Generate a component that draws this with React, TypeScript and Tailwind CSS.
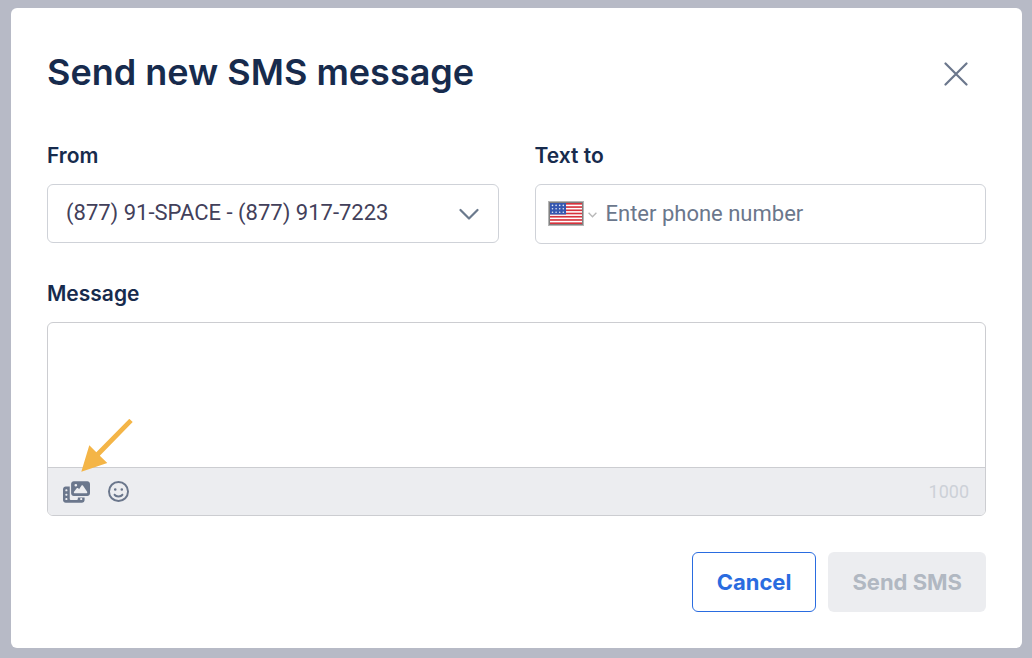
import { useState } from "react";
import { FaPhotoFilm, FaRegFaceSmile } from "react-icons/fa6";

function CloseIcon() {
  return (
    <svg width="24" height="24" viewBox="0 0 24 24" fill="none" stroke="#6b778c" strokeWidth="2.2" strokeLinecap="round" aria-hidden="true">
      <path d="M1.5 1.5l21 21M22.5 1.5l-21 21" />
    </svg>
  );
}

function ChevronIcon() {
  return (
    <svg
      className="pointer-events-none col-start-1 row-start-1 mr-5 self-center justify-self-end"
      width="20"
      height="12"
      viewBox="0 0 20 12"
      fill="none"
      stroke="#6b7a8d"
      strokeWidth="2.2"
      strokeLinecap="round"
      strokeLinejoin="round"
      aria-hidden="true"
    >
      <path d="M1.5 2L10 10.5L18.5 2" />
    </svg>
  );
}

function FlagIcon() {
  const stripes = [0, 1, 2, 3, 4, 5, 6];
  const stars = [0, 1, 2, 3];
  return (
    <svg width="36" height="25" viewBox="0 0 36 25" aria-hidden="true">
      <rect width="36" height="25" fill="#b5b5b5" />
      <rect x="1" y="1" width="34" height="23" fill="#808080" />
      <rect x="2" y="2" width="32" height="21" fill="#fff" />
      {stripes.map((i) => (
        <rect key={i} x="2" y={2 + i * 3.23} width="32" height="1.65" fill="#d6323c" />
      ))}
      <rect x="2" y="2" width="16" height="11.5" fill="#3557b0" />
      {stars.map((c) =>
        [0, 1, 2].map((r) => (
          <circle key={`${c}-${r}`} cx={4.5 + c * 3.6} cy={4.4 + r * 3.4} r="0.8" fill="#e3e9f7" />
        )),
      )}
    </svg>
  );
}

const labelClass = "text-[21px] leading-7 font-semibold text-[#172b4d]";

export default function App() {
  const [message, setMessage] = useState("");
  const [phone, setPhone] = useState("");

  return (
    <div className="min-h-screen bg-[#b7bac6] pt-2 pr-[10px] pb-[10px] pl-[11px] font-['Inter',sans-serif]">
      <form role="dialog" aria-labelledby="title" className="rounded-md bg-white p-9" onSubmit={(e) => e.preventDefault()}>
        <header className="flex items-center justify-between">
          <h1 id="title" className="text-4xl leading-[56px] font-semibold text-[#172b4d]">
            Send new SMS message
          </h1>
          <button type="button" aria-label="Close" className="mt-1 mr-[18px]">
            <CloseIcon />
          </button>
        </header>

        <div className="mt-[42px] grid grid-cols-2 gap-9">
          <div className="flex flex-col gap-[14px]">
            <label htmlFor="from" className={labelClass}>From</label>
            <div className="grid">
              <select
                id="from"
                className="col-start-1 row-start-1 h-[59px] w-full appearance-none rounded-md border border-[#cfd2d8] bg-white pr-12 pb-0.5 pl-[18px] font-['Roboto',sans-serif] text-[22px] text-[#42405a]"
              >
                <option>(877) 91-SPACE - (877) 917-7223</option>
              </select>
              <ChevronIcon />
            </div>
          </div>
          <div className="flex flex-col gap-[14px]">
            <label htmlFor="phone" className={labelClass}>Text to</label>
            <div className="flex h-[60px] items-center rounded-md border border-[#cfd2d8] pr-4 pb-0.5 pl-3">
              <button type="button" aria-label="Country: United States" className="flex items-center gap-1">
                <FlagIcon />
                <svg className="mt-1" width="9" height="6" viewBox="0 0 9 6" fill="none" stroke="#b8b8b8" strokeWidth="1.3" aria-hidden="true">
                  <path d="M0.6 0.7L4.5 4.7L8.4 0.7" />
                </svg>
              </button>
              <input
                id="phone"
                type="tel"
                value={phone}
                onChange={(e) => setPhone(e.target.value)}
                placeholder="Enter phone number"
                className="ml-[9px] min-w-0 flex-1 font-['Roboto',sans-serif] text-[22px] text-[#42405a] outline-none placeholder:text-[#6b778c]"
              />
            </div>
          </div>
        </div>

        <div className="mt-9 flex flex-col gap-[14px]">
          <label htmlFor="message" className={labelClass}>Message</label>
          <div className="relative overflow-hidden rounded-md border border-[#cccdd1]">
            <textarea
              id="message"
              value={message}
              maxLength={1000}
              onChange={(e) => setMessage(e.target.value)}
              className="block h-36 w-full resize-none px-[18px] py-3 text-xl outline-none"
            />
            <div className="flex h-12 items-center border-t border-[#cccdd1] bg-[#ecedf0] pr-4 pl-[15px] text-[#6b778c]">
              <button type="button" aria-label="Add media"><FaPhotoFilm className="h-[22px] w-[27px]" /></button>
              <button type="button" aria-label="Add emoji" className="ml-[18px]"><FaRegFaceSmile className="size-[21px]" /></button>
              <span className="ml-auto font-['Roboto',sans-serif] text-lg text-[#cdd1d8]">{1000 - message.length}</span>
            </div>
            <svg className="pointer-events-none absolute top-24 left-8" width="54" height="54" viewBox="0 0 54 54" aria-hidden="true">
              <path d="M1.3 52.7L9.3 26.3L16.3 33.2L49.3 -0.2L52.7 3L19.8 36.8L27.3 43.9Z" fill="#f4b547" />
            </svg>
          </div>
        </div>

        <footer className="mt-9 flex justify-end gap-3">
          <button type="button" className="h-[60px] rounded-md border border-[#2a6ce0] px-6 text-[22px] font-bold text-[#2a6ce0]">
            Cancel
          </button>
          <button type="submit" disabled className="h-[60px] rounded-md bg-[#ecedf0] px-6 text-[22px] font-bold text-[#b1b8c2]">
            Send SMS
          </button>
        </footer>
      </form>
    </div>
  );
}
